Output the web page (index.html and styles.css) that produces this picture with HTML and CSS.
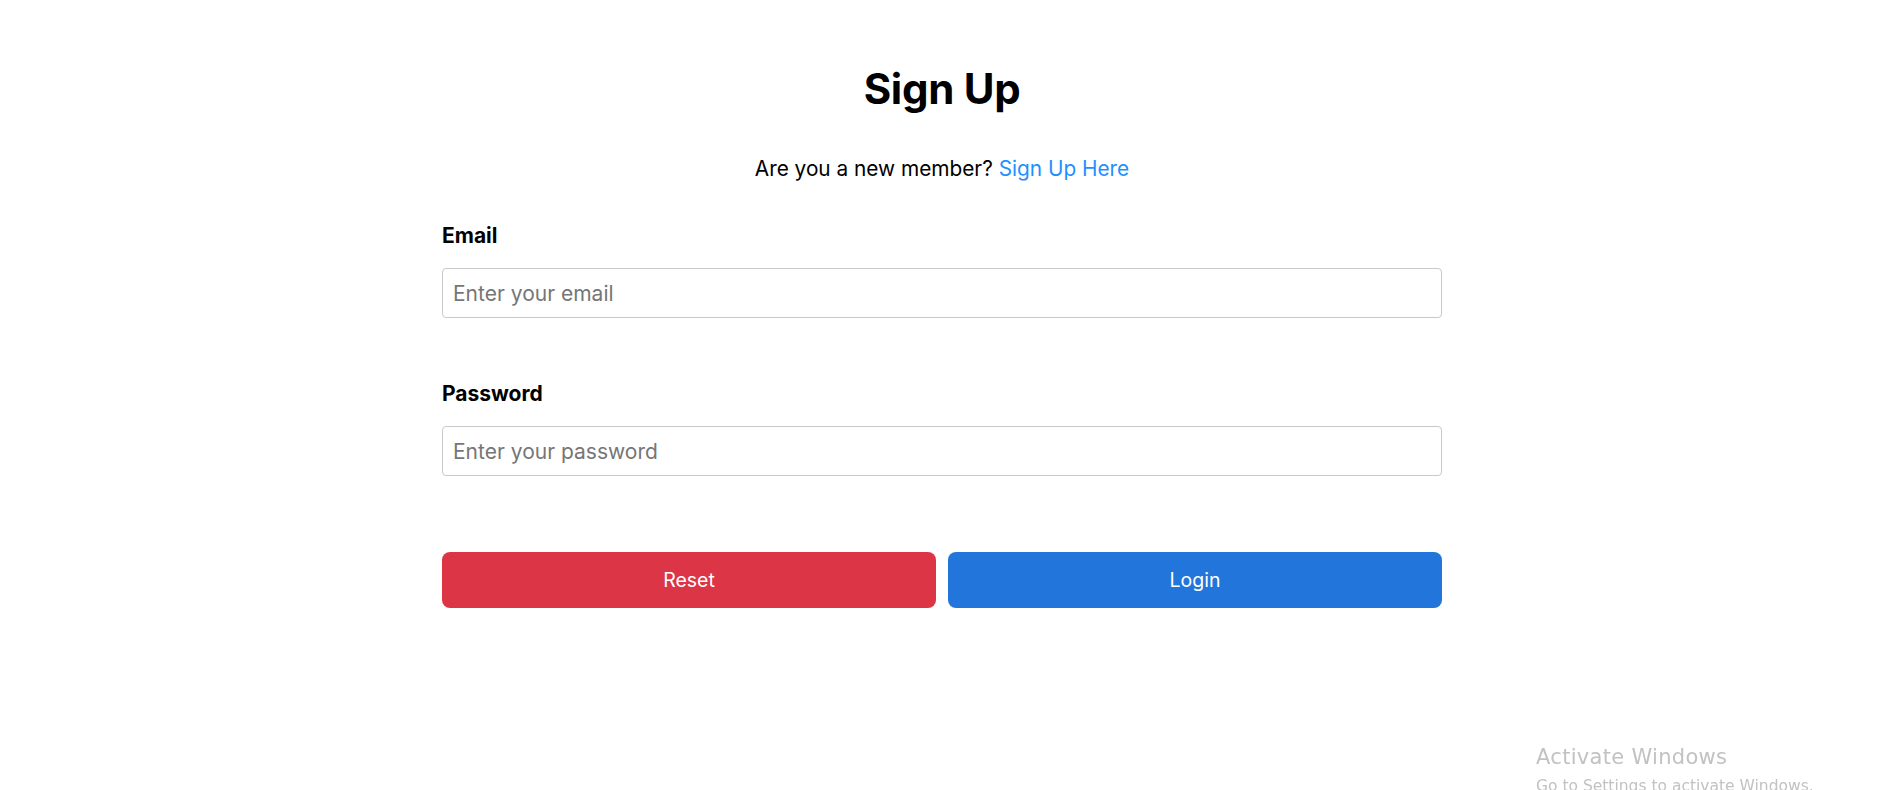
FILE: index.html
```html
<!DOCTYPE html>
<html lang="en">
<head>
<meta charset="utf-8">
<title>Sign Up</title>
<link rel="stylesheet" href="styles.css">
</head>
<body>
<div class="page">
  <main class="card">
    <h1 class="title">Sign Up</h1>
    <p class="subtitle">Are you a new member? <a class="link" href="#">Sign Up Here</a></p>
    <form class="form">
      <div class="field">
        <label class="label" for="email">Email</label>
        <input class="input" id="email" type="email" placeholder="Enter your email">
      </div>
      <div class="field">
        <label class="label" for="password">Password</label>
        <input class="input" id="password" type="password" placeholder="Enter your password">
      </div>
      <div class="actions">
        <button class="btn btn-reset" type="reset">Reset</button>
        <button class="btn btn-login" type="button">Login</button>
      </div>
    </form>
  </main>
</div>
<div class="watermark">
  <div class="wm-title">Activate Windows</div>
  <div class="wm-sub">Go to Settings to activate Windows.</div>
</div>
</body>
</html>
```
FILE: styles.css
```css
* { box-sizing: border-box; }
html, body { margin: 0; padding: 0; background: #ffffff; }
body {
  font-family: "Inter", "Open Sans", sans-serif;
  color: #000;
  overflow: hidden;
  height: 790px;
}
.page {
  padding-right: 16px;
}
.card {
  width: 1000px;
  margin: 0 auto;
  display: flex;
  flex-direction: column;
}
.title {
  margin: 64px 0 0;
  font-size: 42px;
  line-height: 50px;
  font-weight: 700;
  text-align: center;
  letter-spacing: -0.3px;
}
.subtitle {
  margin: 40px 0 0;
  font-size: 20.8px;
  line-height: 30px;
  text-align: center;
}
.link {
  color: #1e90ff;
  text-decoration: none;
}
.form {
  margin-top: 37px;
  display: flex;
  flex-direction: column;
}
.field {
  display: flex;
  flex-direction: column;
  gap: 17px;
  margin-bottom: 61px;
}
.label {
  font-size: 21px;
  line-height: 30px;
  font-weight: 700;
}
.input {
  width: 100%;
  height: 50px;
  border: 1px solid #c9c9c9;
  border-radius: 4px;
  padding: 0 10px;
  font-family: inherit;
  font-size: 21px;
  color: #000;
  background: #fff;
  outline: none;
}
.input::placeholder { color: #767676; }
.field:nth-of-type(2) { margin-bottom: 76px; }
.actions {
  display: grid;
  grid-template-columns: 1fr 1fr;
  gap: 12px;
}
.btn {
  height: 56px;
  border: none;
  border-radius: 8px;
  color: #fff;
  font-family: inherit;
  font-size: 19.5px;
  font-weight: 400;
  cursor: pointer;
}
.btn-reset { background: #dc3545; }
.btn-login { background: #2275db; }
.watermark {
  position: fixed;
  left: 1536px;
  top: 743px;
  color: #c2c2c2;
  font-family: "DejaVu Sans", sans-serif;
  pointer-events: none;
}
.wm-title {
  font-size: 21px;
  line-height: 28px;
  letter-spacing: 0.3px;
  font-weight: 400;
}
.wm-sub {
  font-size: 15.5px;
  line-height: 20px;
  margin-top: 5px;
}
```
